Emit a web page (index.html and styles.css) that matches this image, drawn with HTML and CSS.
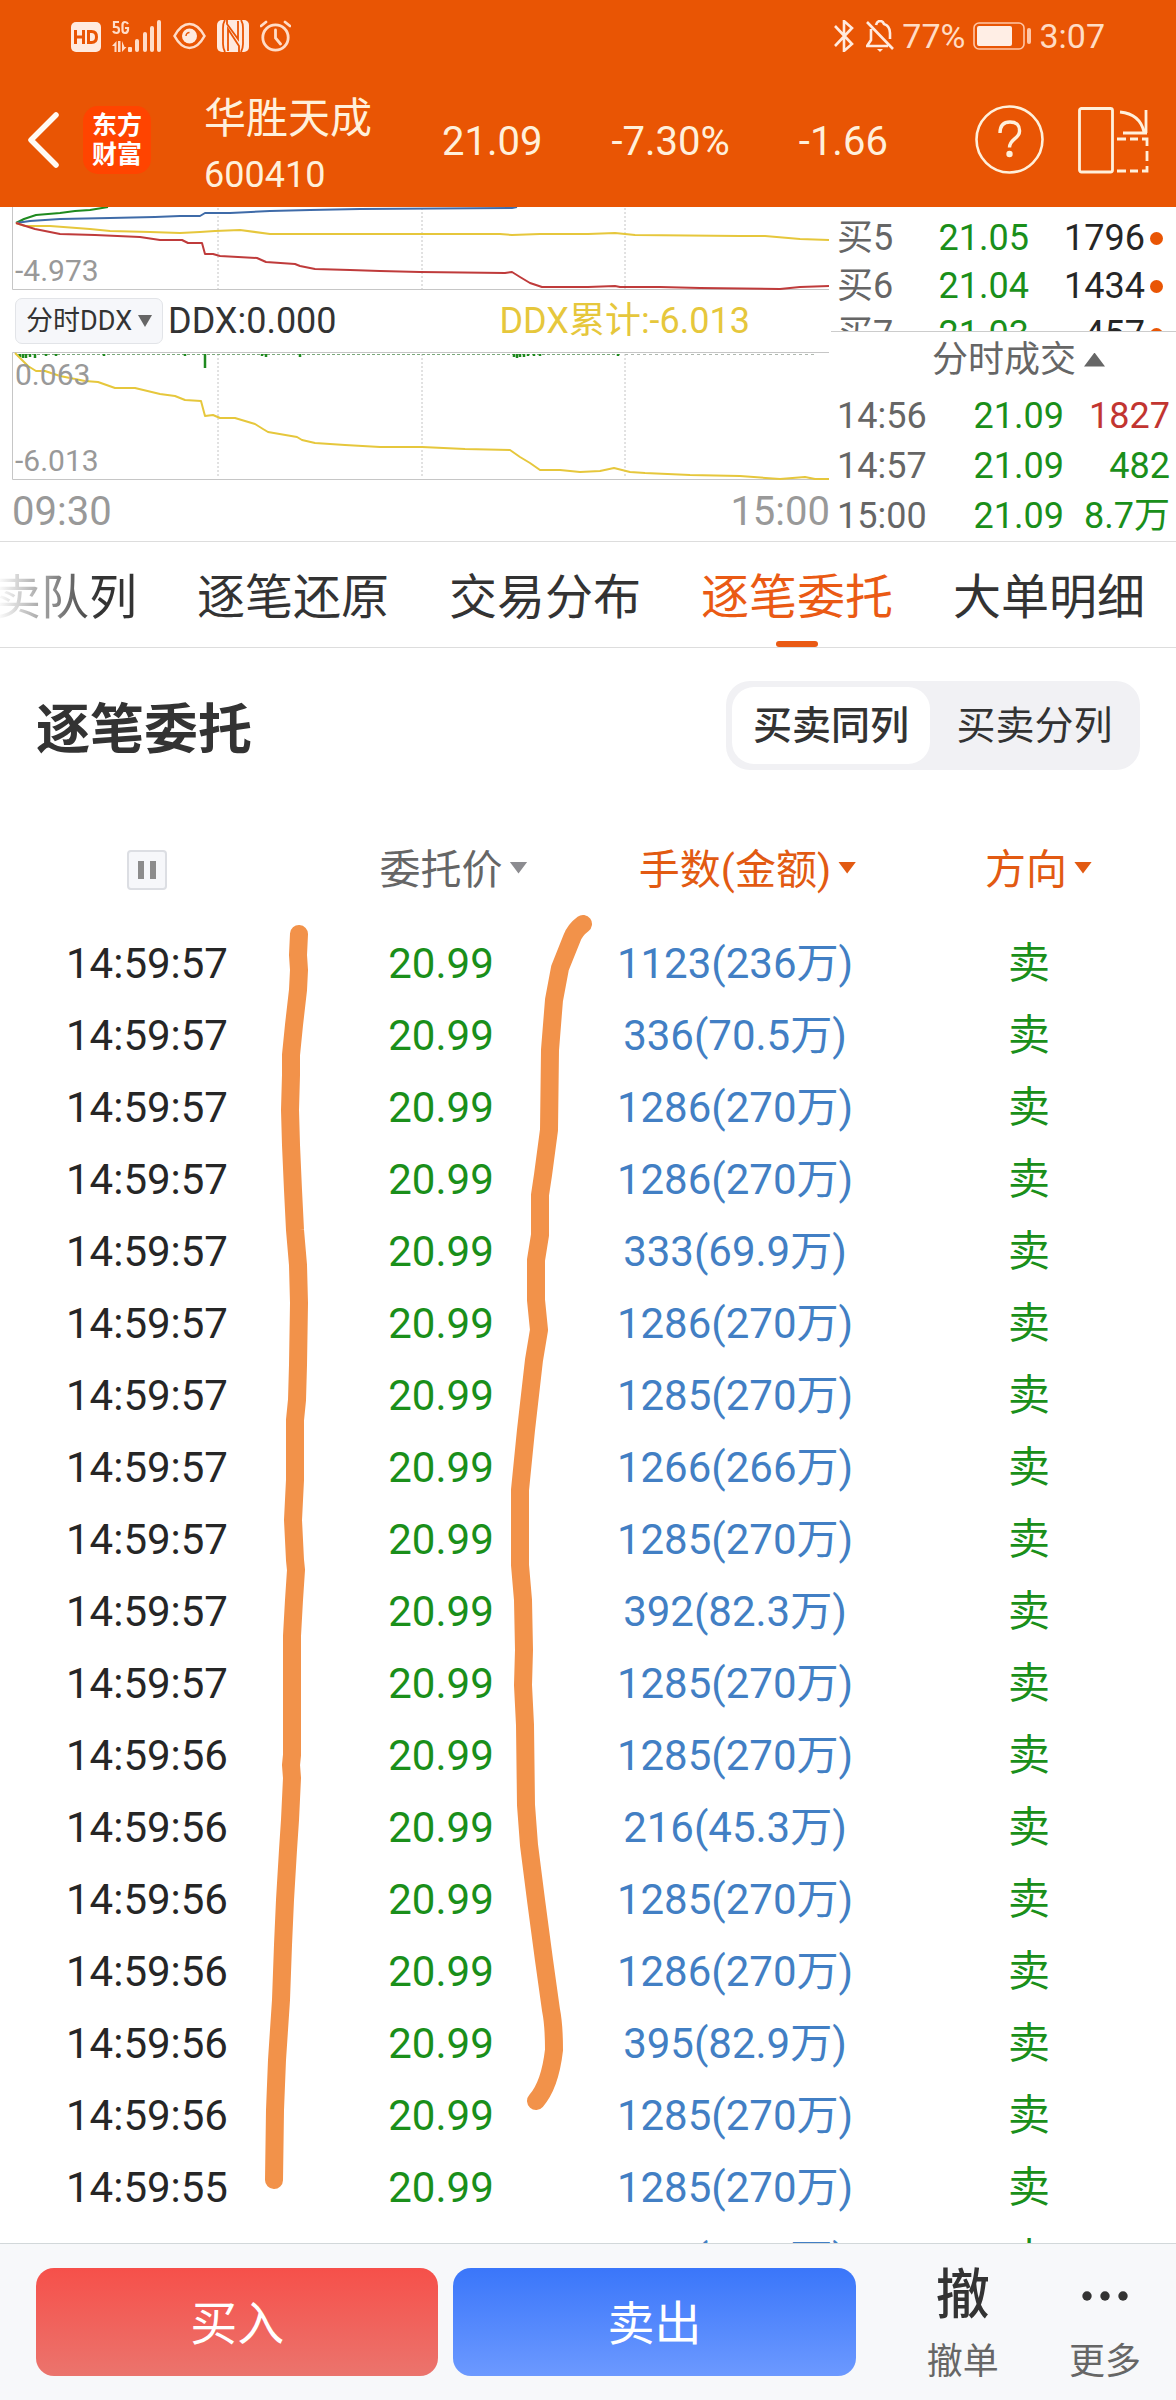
FILE: index.html
```html
<!DOCTYPE html>
<html lang="zh-CN">
<head>
<meta charset="utf-8">
<meta name="viewport" content="width=device-width, initial-scale=1">
<title>华胜天成 600410</title>
<link rel="stylesheet" href="styles.css">
</head>
<body>
<div class="app">
  <header class="top">
    <div class="status">
      <div class="status-group status-left">
        <svg width="30" height="32" viewBox="0 0 30 32" aria-hidden="true"><rect y="2" width="30" height="30" rx="5" fill="#ffeadf"/><g fill="none" stroke="#e95504" stroke-width="3"><path d="M4.500 10v14M12.500 10v14M4.500 17h8M17.500 11.500v11h3q5 0 5-5.500t-5-5.500z"/></g></svg>
        <svg width="50" height="32" viewBox="0 0 50 32" aria-hidden="true"><g fill="none" stroke="#ffdcc8" stroke-width="2.200"><path d="M7 2H2v5h2q3 0 3 3t-2.500 3T1 11M16 4q-1-2-3-2-2.500 0-2.500 3v5q0 3 2.500 3t3-3V8h-3"/></g><path d="M0 26l4.500-5v11H2.500v-6zM6 21h2.500v11H6zM10 21v11l4.500-5h-2z" fill="#ffdcc8"/><g fill="#ffdcc8"><rect x="16" y="27" width="4" height="5" rx="1"/><rect x="23" y="19" width="4" height="13" rx="2"/><rect x="31" y="12" width="4" height="20" rx="2"/><rect x="38" y="6" width="4" height="26" rx="2"/><rect x="45" y="0" width="4" height="32" rx="2"/></g></svg>
        <svg width="33" height="32" viewBox="0 0 33 32" aria-hidden="true"><path d="M1.500 16Q8 4 16.500 4T31.500 16Q25 28 16.500 28T1.500 16z" fill="none" stroke="#ffdcc8" stroke-width="2.600"/><circle cx="16.500" cy="16" r="7.500" fill="#ffeadf"/><path d="M13 16a3.500 3.500 0 0 1 3.500-3.500" fill="none" stroke="#e95504" stroke-width="1.500"/></svg>
        <svg width="32" height="32" viewBox="0 0 32 32" aria-hidden="true"><rect width="32" height="32" rx="5" fill="#ffeadf"/><g fill="none" stroke="#e95504" stroke-width="1.800"><path d="M8 0q-2 3-2 8v16q0 4 2 8M24 0q2 3 2 8v16q0 4-2 8M11 31V9l11 17v6M10 0v4l11 15V1"/></g></svg>
        <svg width="31" height="32" viewBox="0 0 31 32" aria-hidden="true"><g fill="none" stroke="#ffdcc8" stroke-width="2.800"><circle cx="15.500" cy="17.500" r="12.700"/><path d="M15.500 10v8l5 6M1 6l5-4M30 6l-5-4" stroke-linecap="round"/></g></svg>
      </div>
      <div class="status-group">
        <svg width="22" height="32" viewBox="0 0 22 32" aria-hidden="true"><path d="M2 6l17 18-8 7V1l8 7L2 26" fill="none" stroke="#ffeadf" stroke-width="2.600"/></svg>
        <svg class="status-bell" width="28" height="32" viewBox="0 0 28 32" aria-hidden="true"><g fill="none" stroke="#ffeadf" stroke-width="2.600"><path d="M1 2l26 27M5 9v11l-4 6h21M10 5q1-4 4-4t4 3q6 2 6 9v6"/></g><path d="M11 29h6l-3 3z" fill="#ffeadf"/></svg>
        <span>77%</span>
        <svg width="58" height="28" viewBox="0 0 58 28" aria-hidden="true"><rect x="1" y="1" width="50" height="26" rx="5" fill="none" stroke="#ffc6a6" stroke-width="1.600"/><rect x="4" y="4" width="35" height="20" rx="2" fill="#ffeee5"/><rect x="54" y="6" width="4" height="16" rx="2" fill="#ffc6a6"/></svg>
        <span>3:07</span>
      </div>
    </div>
    <div class="bar">
      <button class="icon-btn" type="button" aria-label="返回"><svg width="32" height="56" viewBox="0 0 32 56"><path d="M29 3L4 28l25 25" fill="none" stroke="#fffaf3" stroke-width="5.500" stroke-linecap="round" stroke-linejoin="round"/></svg></button>
      <a class="logo" href="#"><span>东方</span><span>财富</span></a>
      <div class="stock"><h1 class="stock-name">华胜天成</h1><span class="stock-code">600410</span></div>
      <div class="quote"><span>21.09</span><span>-7.30%</span><span>-1.66</span></div>
      <div class="bar-tools">
        <button class="icon-btn" type="button" aria-label="帮助"><svg width="69" height="69" viewBox="0 0 69 69"><circle cx="34.500" cy="34.500" r="33" fill="none" stroke="#fff0db" stroke-width="2.600"/><path d="M25 28q0-11 10-11t9.500 9.500c0 7-10 7.500-10 16" fill="none" stroke="#fff0db" stroke-width="3.400"/><circle cx="34.500" cy="49" r="3.200" fill="#fff0db"/></svg></button>
        <button class="icon-btn" type="button" aria-label="横屏"><svg width="73" height="68" viewBox="0 0 73 68"><g fill="none" stroke="#fff0db" stroke-width="2.800"><rect x="2.500" y="2.500" width="33" height="63.500" rx="2"/><path d="M43 6q20 2 24 20M69 4v23M46 27h24" /><path d="M40 33h9m4 0h8m4 0h5v7m0 5v10m0 5v5h-5m-4 0h-8m-4 0h-9"/></g></svg></button>
      </div>
    </div>
  </header>

  <section class="market">
    <div class="charts">
      <div class="chart chart-flow">
        <svg class="plot" viewBox="0 207 831 83" preserveAspectRatio="none" aria-hidden="true">
          <g class="grid"><path d="M218 208v81M422 208v81M625 208v81"/></g>
          <path class="frame" d="M12.500 207v82.500H829"/>
          <path class="line green" d="M16 223l8-4 12-4 24-2 15-2 15-1 18-3"/>
          <path class="line blue" d="M16 223l14-2 30-2 50-1 45-1 25-1h20l5-3h25l40-2 40-1 50-1 152-1 5-1"/>
          <path class="line yellow" d="M16 223l9 3h25l40 3 20 2 40 1 30 1 20-1 15-1 25-1 30 4h230l12 1 28-1h48l27-1 20 2 105 1h25l35 3 29 1"/>
          <path class="line red" d="M16 223l19 6 25 5 35 1 45 2 20 3h22l6 3h14l3 11h8l7 2 37 2 9 4 29 2 5 2 15 3 35 1 30 1 40 1 85 1 7-1 8 5 10 6 12 4h46l27-1 5 1h40l40 1 80 1 20-2 29-1"/>
        </svg>
        <span class="scale scale-low">-4.973</span>
      </div>
      <div class="indicator">
        <button class="picker" type="button">分时DDX<i class="tri tri-down"></i></button>
        <span>DDX:0.000</span>
        <span class="indicator-sum">DDX累计:-6.013</span>
      </div>
      <div class="chart chart-ddx">
        <svg class="plot" viewBox="0 352 831 128" preserveAspectRatio="none" aria-hidden="true">
          <g class="grid"><path d="M218 354v124M422 354v124M625 354v124"/></g>
          <path class="frame" d="M829 352.500H12.500v127H829"/>
          <path d="M17 354.500H620" stroke="#7aa87a" stroke-width="1" stroke-dasharray="3 2" fill="none"/>
          <path d="M625 354.500H817" stroke="#b0b8b0" stroke-width="1" stroke-dasharray="3 3" fill="none"/>
          <path d="M20 354v3M23 354v4M26 354v4M30 354v3M35 354v4M46 354v2M56 354v2M104 354v2M185 354v2M205 354v14M262 354v2M266 354v3M300 354v3M514 354v3M517 354v4M520 354v3M524 354v3M528 354v2M534 354v2M540 354v2M618 354v2" stroke="#1f8a1f" stroke-width="2.500" fill="none"/>
          <path class="line yellow" d="M15 353l13 13 8 5h9l15 5 25 5 13 1 17 6h20l25 6 15 2 10 4 16 1 4 15 8-1 7 3h15l20 6 8 5 5 3 29 5 5 3 13 3 30 2 35 2h42l43 2 45 1 10 7 10 6 10 7h20l20 2 20-1 14-3 16 4 15 1 45 2 50 1 40 3 25-2 10 2h14"/>
        </svg>
        <span class="scale scale-high">0.063</span>
        <span class="scale scale-low">-6.013</span>
      </div>
      <div class="axis"><span>09:30</span><span>15:00</span></div>
    </div>
    <div class="side">
      <div class="book">
        <table>
          <tr><th scope="row">买5</th><td class="down">21.05</td><td>1796</td><td class="dot-cell"><i class="dot"></i></td></tr>
          <tr><th scope="row">买6</th><td class="down">21.04</td><td>1434</td><td class="dot-cell"><i class="dot"></i></td></tr>
          <tr><th scope="row">买7</th><td class="down">21.03</td><td>457</td><td class="dot-cell"><i class="dot"></i></td></tr>
        </table>
      </div>
      <button class="deals-toggle" type="button">分时成交<i class="tri tri-up"></i></button>
      <table class="deals">
        <tr><th scope="row">14:56</th><td class="down">21.09</td><td class="up">1827</td></tr>
        <tr><th scope="row">14:57</th><td class="down">21.09</td><td class="down">482</td></tr>
        <tr><th scope="row">15:00</th><td class="down">21.09</td><td class="down">8.7万</td></tr>
      </table>
    </div>
  </section>

  <nav class="tabs">
    <a href="#">买卖队列</a>
    <a href="#">逐笔还原</a>
    <a href="#">交易分布</a>
    <a class="active" href="#" aria-current="page">逐笔委托</a>
    <a href="#">大单明细</a>
  </nav>

  <main class="panel">
    <div class="panel-head">
      <h2>逐笔委托</h2>
      <div class="segmented">
        <button class="selected" type="button" aria-pressed="true">买卖同列</button>
        <button type="button" aria-pressed="false">买卖分列</button>
      </div>
    </div>
    <div class="orders-wrap">
      <table class="orders">
        <thead>
          <tr>
            <th><button class="pause" type="button" aria-label="暂停"></button></th>
            <th><button class="sort" type="button">委托价<i class="tri tri-down"></i></button></th>
            <th><button class="sort sort-on" type="button">手数(金额)<i class="tri tri-down"></i></button></th>
            <th><button class="sort sort-on" type="button">方向<i class="tri tri-down"></i></button></th>
          </tr>
        </thead>
        <tbody>
          <tr><td>14:59:57</td><td>20.99</td><td>1123(236万)</td><td>卖</td></tr>
          <tr><td>14:59:57</td><td>20.99</td><td>336(70.5万)</td><td>卖</td></tr>
          <tr><td>14:59:57</td><td>20.99</td><td>1286(270万)</td><td>卖</td></tr>
          <tr><td>14:59:57</td><td>20.99</td><td>1286(270万)</td><td>卖</td></tr>
          <tr><td>14:59:57</td><td>20.99</td><td>333(69.9万)</td><td>卖</td></tr>
          <tr><td>14:59:57</td><td>20.99</td><td>1286(270万)</td><td>卖</td></tr>
          <tr><td>14:59:57</td><td>20.99</td><td>1285(270万)</td><td>卖</td></tr>
          <tr><td>14:59:57</td><td>20.99</td><td>1266(266万)</td><td>卖</td></tr>
          <tr><td>14:59:57</td><td>20.99</td><td>1285(270万)</td><td>卖</td></tr>
          <tr><td>14:59:57</td><td>20.99</td><td>392(82.3万)</td><td>卖</td></tr>
          <tr><td>14:59:57</td><td>20.99</td><td>1285(270万)</td><td>卖</td></tr>
          <tr><td>14:59:56</td><td>20.99</td><td>1285(270万)</td><td>卖</td></tr>
          <tr><td>14:59:56</td><td>20.99</td><td>216(45.3万)</td><td>卖</td></tr>
          <tr><td>14:59:56</td><td>20.99</td><td>1285(270万)</td><td>卖</td></tr>
          <tr><td>14:59:56</td><td>20.99</td><td>1286(270万)</td><td>卖</td></tr>
          <tr><td>14:59:56</td><td>20.99</td><td>395(82.9万)</td><td>卖</td></tr>
          <tr><td>14:59:56</td><td>20.99</td><td>1285(270万)</td><td>卖</td></tr>
          <tr><td>14:59:55</td><td>20.99</td><td>1285(270万)</td><td>卖</td></tr>
          <tr><td>14:59:55</td><td>20.99</td><td>395(82.9万)</td><td>卖</td></tr>
        </tbody>
      </table>
      <svg class="marks" viewBox="0 811 1176 1432" preserveAspectRatio="none" aria-hidden="true">
        <path d="M299 934L298 955 299 970 298 990 294 1025 291 1055 291 1075 290 1110 291 1145 293 1190 295 1230 298 1265 299 1303 298 1365 297 1400 295 1420 295 1480 293 1520 295 1560 296 1570 294 1600 292 1636 292 1755 291 1765 292 1778 290 1820 288 1850 285 1900 283 1945 281 2000 277 2060 275 2110 274 2180"/>
        <path d="M583 924Q575 930 572 938L560 968 554 1000 550 1050 549 1130 543 1175 540 1195 540 1235 536 1260 536 1300 539 1330 534 1360 526 1430 520 1490 520 1565 523 1600 524 1650 523 1685 525 1725 526 1805 529 1845 536 1900 544 1960 551 2010Q554 2025 554 2050 550 2085 536 2101"/>
      </svg>
    </div>
  </main>

  <footer class="actions">
    <button class="trade buy" type="button">买入</button>
    <button class="trade sell" type="button">卖出</button>
    <div class="more-actions">
      <button class="action" type="button"><span class="action-icon">撤</span><span>撤单</span></button>
      <button class="action" type="button"><span class="action-icon"><svg width="46" height="10" viewBox="0 0 46 10" aria-hidden="true"><g fill="#333"><circle cx="5" cy="5" r="4.700"/><circle cx="23" cy="5" r="4.700"/><circle cx="41" cy="5" r="4.700"/></g></svg></span><span>更多</span></button>
    </div>
  </footer>
</div>
</body>
</html>
```
FILE: styles.css
```css
* { box-sizing: border-box; }
body, h1, h2 { margin: 0; }
body {
  background: #fff;
  color: #262626;
  font-family: Roboto, "Noto Sans CJK SC", sans-serif;
}
button { padding: 0; border: 0; background: none; color: inherit; font: inherit; }
a { color: inherit; text-decoration: none; }
svg { display: block; }
table { width: 100%; border-collapse: collapse; table-layout: fixed; }
th, td { padding: 0; font-weight: 400; white-space: nowrap; }

.app { display: flex; flex-direction: column; height: 100vh; overflow: hidden; }

/* status bar and title bar */
.top { flex: none; background: #e95504; color: #fff0db; }
.status {
  display: flex; justify-content: space-between; align-items: center;
  height: 72px; padding: 0 71px; color: #ffdcc4; font-size: 34px; line-height: 40px;
}
.status-group { display: flex; align-items: center; gap: 8px; }
.status-left { gap: 11px; }
.status-bell { margin-left: 3px; }
.bar { display: flex; align-items: center; height: 135px; padding: 0 26px 0 27px; }
.logo {
  display: flex; flex-direction: column; align-items: center; justify-content: center;
  width: 68px; height: 68px; margin-left: 24px; border-radius: 15px;
  background: #ff4400; color: #fff; font-size: 25px; font-weight: 700; line-height: 29px;
}
.stock { display: flex; flex-direction: column; margin-left: 53px; padding-top: 14px; line-height: 56px; }
.stock-name { font-size: 42px; font-weight: 400; }
.stock-code { font-size: 36px; }
.quote { display: flex; gap: 69px; margin-left: 70px; padding-top: 4px; font-size: 40px; }
.bar-tools { display: flex; align-items: center; gap: 33px; margin-left: auto; }

/* charts and order book */
.market { display: flex; flex: none; border-bottom: 1px solid #ddd; }
.charts { flex: 831; min-width: 0; }
.side { flex: 345; min-width: 0; }
.chart { position: relative; }
.chart-flow { height: 83px; }
.chart-ddx { height: 128px; }
.plot { width: 100%; height: 100%; }
.grid { fill: none; stroke: #c4c4c4; stroke-dasharray: 2 2; }
.frame { fill: none; stroke: #c6c6c6; }
.line { fill: none; stroke-width: 2; stroke-linejoin: round; }
.green { stroke: #1f8a1f; }
.blue { stroke: #3f6ba8; }
.yellow { stroke: #e6c73c; }
.red { stroke: #bf3b3b; }
.scale { position: absolute; left: 15px; color: #999; font-size: 30px; line-height: 36px; }
.scale-low { bottom: 1px; }
.scale-high { top: 5px; }
.indicator { display: flex; align-items: center; height: 62px; padding-left: 15px; font-size: 36px; line-height: 46px; color: #333; }
.picker {
  display: flex; align-items: center; justify-content: space-between;
  width: 148px; height: 46px; margin-right: 5px; padding: 0 10px;
  border: 1px solid #e2e4e8; border-radius: 7px; background: #f6f7fa; font-size: 27px;
}
.indicator-sum { margin: 0 81px 0 auto; color: #e6c73c; }
.axis { display: flex; justify-content: space-between; height: 61px; padding: 0 1px 0 12px; color: #999; font-size: 40px; line-height: 64px; }

.tri { display: inline-block; width: 18px; height: 12px; background: currentColor; }
.tri-down { clip-path: polygon(0 0, 100% 0, 50% 100%); }
.tri-up { clip-path: polygon(50% 0, 100% 100%, 0 100%); }
.picker .tri { width: 14px; color: #666; }

.side table { font-size: 36px; line-height: 48px; text-align: right; }
.side th { padding-left: 6px; color: #666; text-align: left; }
.book { height: 125px; padding-top: 7px; border-bottom: 1px solid #ccc; overflow: hidden; }
.book th { width: 93px; }
.book td:nth-child(2) { width: 105px; }
.book .dot-cell { width: 31px; padding-right: 13px; }
.dot { display: block; width: 13px; height: 13px; margin-left: auto; border-radius: 50%; background: #e95504; }
.deals-toggle { display: flex; align-items: center; justify-content: center; gap: 8px; width: 100%; height: 59px; padding: 0 0 4px 30px; color: #666; font-size: 36px; line-height: 54px; }
.deals-toggle .tri { width: 21px; height: 14px; }
.side .deals { line-height: 50px; }
.deals td:last-child { padding-right: 6px; }
.deals th { width: 113px; }
.deals td:nth-child(2) { width: 120px; }
.down { color: #1a8f1a; }
.up { color: #c23531; }

/* section tabs */
.tabs {
  display: flex; flex: none; justify-content: flex-end; gap: 60px; height: 106px; padding-right: 31px;
  border-bottom: 1px solid #ddd; overflow: hidden; color: #333; font-size: 48px; line-height: 111px;
}
.tabs a { position: relative; flex: none; height: 105px; }
.tabs a:first-child { background: linear-gradient(90deg, #fff 27%, #333 80%); background-clip: text; color: transparent; }
.tabs .active { color: #ea5a14; }
.tabs .active::after {
  content: ""; position: absolute; bottom: 0; left: 50%; width: 42px; height: 6px;
  margin-left: -21px; border-radius: 3px; background: #ea5a14;
}

/* order list */
.panel { flex: 1; min-height: 0; overflow: hidden; }
.panel-head { display: flex; align-items: center; justify-content: space-between; padding: 33px 36px 41px; color: #333; }
.panel-head h2 { padding-top: 10px; font-size: 54px; line-height: 72px; }
.segmented { display: flex; height: 89px; padding: 6px; border-radius: 24px; background: #f1f1f4; font-size: 39px; line-height: 76px; }
.segmented button { width: 198px; border-radius: 22px; }
.segmented button:last-child { width: 204px; padding-left: 5px; }
.segmented .selected { background: #fff; font-weight: 500; }
.orders-wrap { position: relative; height: 1432px; overflow: hidden; }
.orders { font-size: 42px; line-height: 72px; text-align: center; }
.orders thead th { height: 117px; vertical-align: middle; }
.orders tbody td { height: 72px; }
.orders td:nth-child(2), .orders td:nth-child(4) { color: #1a8f1a; }
.orders td:nth-child(3) { color: #427fc4; }
.pause {
  display: block; width: 40px; height: 40px; margin: 0 auto; border: 2px solid #dcdee3; border-radius: 4px;
  background: linear-gradient(90deg, transparent 9px, #8c8c8c 9px 15px, transparent 15px 21px, #8c8c8c 21px 27px, transparent 27px) 0 9px / 36px 18px no-repeat, #f6f7fa;
}
.sort { position: relative; color: #666; font-size: 41px; }
.sort .tri { position: absolute; top: 50%; left: 100%; margin: -8px 0 0 7px; color: #8c8c90; }
.orders .sort-on, .sort-on .tri { color: #e25a12; }
.orders th:last-child { padding-right: 6px; }
.marks { position: absolute; inset: 0; width: 100%; height: 100%; pointer-events: none; }
.marks path { fill: none; stroke: #f2924a; stroke-width: 18; stroke-linecap: round; stroke-linejoin: round; }

/* trade bar */
.actions {
  display: flex; flex: none; gap: 15px; height: 157px; padding: 24px 0 0 36px;
  border-top: 1px solid #d2d8da; background: #f7f8fa;
}
.trade { flex: 402; height: 108px; border-radius: 18px; color: #fff; font-size: 47px; line-height: 112px; }
.buy { background: linear-gradient(#f6504a, #eb746d); }
.sell { background: linear-gradient(#3a76fa, #6c99ff); }
.more-actions { display: flex; flex: 284; margin-left: 21px; }
.action { display: flex; flex: 1; flex-direction: column; align-items: center; height: 118px; color: #666; font-size: 36px; line-height: 48px; }
.action-icon { display: flex; align-items: center; height: 56px; margin-bottom: 14px; color: #333; font-size: 54px; font-weight: 500; }
```
